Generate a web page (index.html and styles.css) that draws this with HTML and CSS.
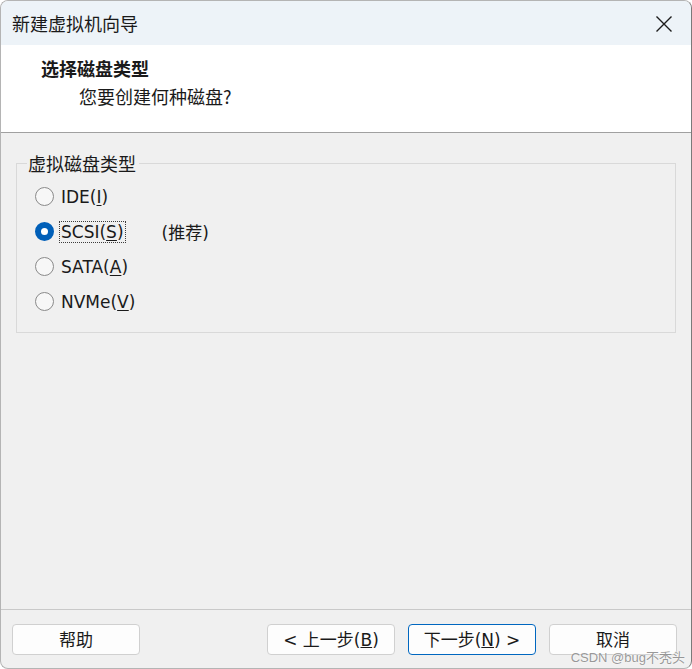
FILE: index.html
```html
<!DOCTYPE html>
<html lang="zh-CN">
<head>
<meta charset="utf-8">
<title>新建虚拟机向导</title>
<link rel="stylesheet" href="styles.css">
</head>
<body>
<div class="window">
  <div class="titlebar">
    <span class="title">新建虚拟机向导</span>
    <svg class="close" width="18" height="18" viewBox="0 0 18 18" aria-hidden="true">
      <path d="M1.5 1.5 L16.5 16.5 M16.5 1.5 L1.5 16.5" stroke="#1c1c1c" stroke-width="1.4" fill="none"/>
    </svg>
  </div>
  <div class="header">
    <div class="h-title">选择磁盘类型</div>
    <div class="h-sub">您要创建何种磁盘?</div>
  </div>
  <div class="content">
    <fieldset class="group">
      <legend class="legend">虚拟磁盘类型</legend>
      <div class="row"><span class="radio"></span><span class="lbl">IDE(<u>I</u>)</span></div>
      <div class="row"><span class="radio checked"></span><span class="lbl focus">SCSI(<u>S</u>)</span><span class="rec">(推荐)</span></div>
      <div class="row"><span class="radio"></span><span class="lbl">SATA(<u>A</u>)</span></div>
      <div class="row"><span class="radio"></span><span class="lbl">NVMe(<u>V</u>)</span></div>
    </fieldset>
  </div>
  <div class="footer">
    <button class="btn">帮助</button>
    <div class="spacer"></div>
    <button class="btn">&lt; 上一步(<u>B</u>)</button>
    <button class="btn default">下一步(<u>N</u>) &gt;</button>
    <button class="btn">取消</button>
  </div>
  <div class="watermark">CSDN @bug不秃头</div>
</div>
</body>
</html>
```

FILE: styles.css
```css
html, body {
  margin: 0;
  padding: 0;
  background: #ffffff;
}
body {
  font-family: "Noto Sans CJK SC", "DejaVu Sans", sans-serif;
  color: #1a1a1a;
}
.window {
  position: relative;
  width: 692px;
  height: 669px;
  box-sizing: border-box;
  border: 1px solid #b4b4b4;
  border-right-color: #7a7a7a;
  border-radius: 8px;
  overflow: hidden;
  display: flex;
  flex-direction: column;
  background: #f0f0f0;
}
.titlebar {
  height: 44px;
  flex: none;
  background: #edf3f8;
  display: flex;
  align-items: center;
  padding: 0 0 0 11px;
}
.title {
  font-size: 18px;
  line-height: 24px;
  flex: 1;
}
.close {
  margin-right: 18px;
  margin-top: 2px;
}
.header {
  height: 88px;
  flex: none;
  background: #ffffff;
  box-sizing: border-box;
  padding: 11px 0 0 40px;
  border-bottom: 1px solid #a0a0a0;
}
.h-title {
  font-size: 18px;
  line-height: 24px;
  font-weight: bold;
}
.h-sub {
  font-size: 18px;
  line-height: 24px;
  margin-top: 4px;
  margin-left: 38px;
}
.content {
  flex: 1;
  padding: 18px 15px 0 15px;
}
.group {
  margin: 0;
  border: 1px solid #d9d9d9;
  padding: 4px 0 13px 10px;
}
.legend {
  font-size: 18px;
  line-height: 24px;
  padding: 0 3px 0 1px;
}
.row {
  height: 35px;
  display: flex;
  align-items: center;
  margin-left: 8px;
  font-family: "DejaVu Sans", "Noto Sans CJK SC", sans-serif;
  font-size: 17px;
}
.radio {
  width: 19px;
  height: 19px;
  box-sizing: border-box;
  border: 1.5px solid #8a8a8a;
  border-radius: 50%;
  background: #f7f7f7;
  flex: none;
  margin-right: 5px;
}
.radio.checked {
  border: 6px solid #005fb8;
  background: #ffffff;
}
.lbl {
  line-height: 20px;
  padding: 0 1px;
  border: 1px solid transparent;
}
.lbl.focus {
  border: 1px dotted #3c3c3c;
}
.rec {
  margin-left: 36px;
  font-size: 17px;
}
.rec, .lbl u {
  text-underline-offset: 2px;
}
.footer {
  flex: none;
  height: 59px;
  box-sizing: border-box;
  border-top: 1px solid #c9c9c9;
  padding: 14px 14px 0 11px;
  display: flex;
  align-items: flex-start;
  gap: 13px;
}
.spacer {
  flex: 1;
}
.btn {
  width: 128px;
  height: 31px;
  box-sizing: border-box;
  border: 1px solid #d0d0d0;
  border-radius: 4px;
  background: #fdfdfd;
  font-family: "DejaVu Sans", "Noto Sans CJK SC", sans-serif;
  font-size: 17px;
  color: #1a1a1a;
  padding: 0;
  line-height: 20px;
  display: flex;
  align-items: center;
  justify-content: center;
}
.btn.default {
  border-color: #0067c0;
}
.watermark {
  position: absolute;
  right: 6px;
  bottom: 4px;
  font-family: "Liberation Sans", "Noto Sans CJK SC", sans-serif;
  font-size: 13px;
  line-height: 13px;
  color: rgba(120, 120, 120, 0.75);
  text-shadow: 0 0 2px #ffffff;
}
```
